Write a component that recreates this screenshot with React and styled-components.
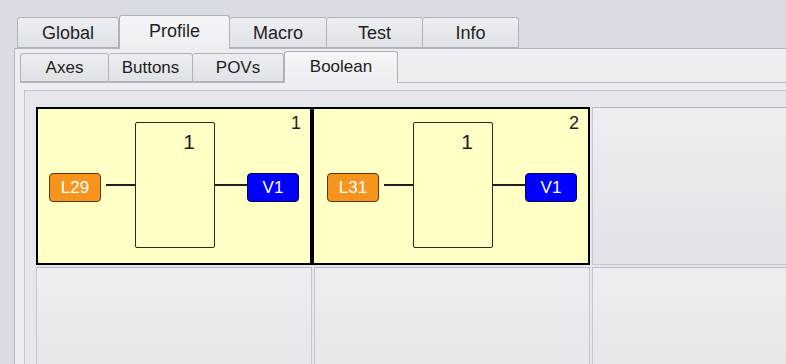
import React from "react";
import styled, { createGlobalStyle } from "styled-components";

const GlobalStyle = createGlobalStyle`
  html, body {
    margin: 0;
    padding: 0;
    background: #d9dce2;
    font-family: "Liberation Sans", Arial, sans-serif;
    color: #1e1e1e;
  }
`;

const Window = styled.div`
  width: 786px;
  height: 364px;
  overflow: hidden;
  display: flex;
  flex-direction: column;
`;

const TabBar = styled.div`
  display: flex;
  flex-shrink: 0;
  align-items: flex-end;
  height: 48px;
  padding-left: 17px;
  box-sizing: border-box;
`;

const Tab = styled.div`
  box-sizing: border-box;
  width: ${(p) => p.width}px;
  height: ${(p) => p.height + (p.active ? 3 : 0)}px;
  margin-bottom: ${(p) => (p.active ? -1 : 0)}px;
  display: flex;
  justify-content: center;
  align-items: ${(p) => (p.active ? "flex-start" : "center")};
  padding-top: ${(p) => (p.active ? 5 : 1)}px;
  font-size: ${(p) => p.size}px;
  border: 1px solid #aeb3bb;
  border-bottom: ${(p) => (p.active ? "none" : "1px solid #aeb3bb")};
  border-left: ${(p) => (p.first || p.active ? "1px solid #aeb3bb" : "none")};
  border-radius: 3px 3px 0 0;
  background: ${(p) =>
    p.active
      ? "linear-gradient(#f4f5f7, #eceef1)"
      : "linear-gradient(#eceef1, #dfe2e6)"};
  position: relative;
  z-index: ${(p) => (p.active ? 1 : 0)};
`;

const Content = styled.div`
  flex: 1;
  min-height: 0;
  margin-left: 14px;
  border-left: 1px solid #b3b8c0;
  border-top: 1px solid #b3b8c0;
  background: #eceef1;
  padding: 1px 0 0 5px;
  display: flex;
  flex-direction: column;
`;

const SubTabBar = styled.div`
  display: flex;
  flex-shrink: 0;
  align-items: flex-end;
  height: 33px;
  border-bottom: 1px solid #b3b8c0;
  box-sizing: border-box;
`;

const Body = styled.div`
  flex: 1;
  min-height: 0;
  margin: 7px 0 0 4px;
  border-left: 1px solid #c1c5cc;
  border-top: 1px solid #c1c5cc;
  background: #e5e7eb;
  padding: 16px 0 0 11px;
`;

const Grid = styled.div`
  display: grid;
  grid-template-columns: 276px 278px 277px;
  grid-template-rows: 158px 158px;
  row-gap: 2px;
`;

const Cell = styled.div`
  box-sizing: border-box;
  position: relative;
  ${(p) =>
    p.filled
      ? `
    background: #ffffc6;
    border: 2px solid #000;
    display: flex;
    align-items: center;
    padding: 0 0 2px ${p.inset}px;
  `
      : `
    margin-left: ${p.edge ? 0 : 2}px;
    background: linear-gradient(#eceef1, #e0e3e7);
    border: 1px solid #c4c8ce;
    border-top-color: #b6bac1;
  `}
`;

const CellNumber = styled.span`
  position: absolute;
  top: 4px;
  right: 9px;
  font-size: 18px;
`;

const Badge = styled.div`
  box-sizing: border-box;
  width: 52px;
  height: 29px;
  border-radius: 4px;
  border: 1px solid ${(p) => (p.kind === "out" ? "#000050" : "#5b3800")};
  background: ${(p) => (p.kind === "out" ? "#0000ff" : "#f7941d")};
  color: #fff;
  font-size: 17px;
  display: flex;
  align-items: center;
  justify-content: center;
  flex-shrink: 0;
  margin-top: 5px;
`;

const Wire = styled.div`
  height: 2px;
  background: #1e1e1e;
  width: ${(p) => p.width}px;
  margin-left: ${(p) => p.gap || 0}px;
  flex-shrink: 0;
`;

const Gate = styled.div`
  box-sizing: border-box;
  width: 80px;
  height: 126px;
  border: 1.5px solid #2a2818;
  border-radius: 2px;
  display: flex;
  justify-content: flex-end;
  padding: 7px 19px 0 0;
  font-size: 21px;
  flex-shrink: 0;
`;

const topTabs = [
  { label: "Global", width: 102 },
  { label: "Profile", width: 111, active: true },
  { label: "Macro", width: 97 },
  { label: "Test", width: 96 },
  { label: "Info", width: 96 },
];

const subTabs = [
  { label: "Axes", width: 89 },
  { label: "Buttons", width: 84 },
  { label: "POVs", width: 91 },
  { label: "Boolean", width: 114, active: true },
];

const rules = [
  { id: 1, input: "L29", output: "V1", level: 1, inset: 11 },
  { id: 2, input: "L31", output: "V1", level: 1, inset: 13 },
];

const Rule = ({ rule }) => (
  <Cell filled inset={rule.inset}>
    <CellNumber>{rule.id}</CellNumber>
    <Badge>{rule.input}</Badge>
    <Wire width={29} gap={5} />
    <Gate>{rule.level}</Gate>
    <Wire width={32} />
    <Badge kind="out">{rule.output}</Badge>
  </Cell>
);

export default function App() {
  return (
    <Window>
      <GlobalStyle />
      <TabBar>
        {topTabs.map((t, i) => (
          <Tab
            key={t.label}
            width={t.width}
            height={31}
            size={18}
            active={t.active}
            first={i === 0}
          >
            {t.label}
          </Tab>
        ))}
      </TabBar>
      <Content>
        <SubTabBar>
          {subTabs.map((t, i) => (
            <Tab
              key={t.label}
              width={t.width}
              height={29}
              size={17}
              active={t.active}
              first={i === 0}
            >
              {t.label}
            </Tab>
          ))}
        </SubTabBar>
        <Body>
          <Grid>
            {rules.map((r) => (
              <Rule key={r.id} rule={r} />
            ))}
            <Cell />
            <Cell edge />
            <Cell />
            <Cell />
          </Grid>
        </Body>
      </Content>
    </Window>
  );
}
